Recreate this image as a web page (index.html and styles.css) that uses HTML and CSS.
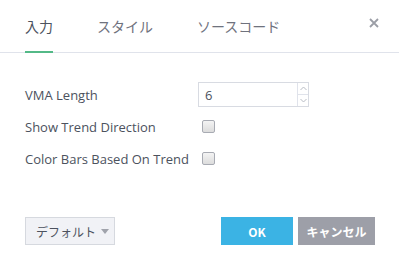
FILE: index.html
```html
<!DOCTYPE html>
<html lang="ja">
<head>
    <meta charset="UTF-8">
    <title>VMA 設定</title>
    <link rel="stylesheet" href="styles.css">
</head>
<body>
    <div class="dialog">
        <div class="tabs">
            <div class="tab active">入力</div>
            <div class="tab">スタイル</div>
            <div class="tab">ソースコード</div>
            <div class="close">
                <svg width="10" height="10" viewBox="0 0 10 10">
                    <path d="M1 1L9 9M9 1L1 9" stroke="#9b9ea6" stroke-width="1.8" fill="none"/>
                </svg>
            </div>
        </div>
        <div class="content">
            <div class="row">
                <label class="label" for="vmaLength">VMA Length</label>
                <div class="spin">
                    <input type="text" id="vmaLength" value="6">
                    <div class="arrows">
                        <span class="arrow">
                            <svg width="7" height="5" viewBox="0 0 7 5"><path d="M0.5 4L3.5 1L6.5 4" stroke="#b8bcc4" fill="none"/></svg>
                        </span>
                        <span class="arrow">
                            <svg width="7" height="5" viewBox="0 0 7 5"><path d="M0.5 1L3.5 4L6.5 1" stroke="#b8bcc4" fill="none"/></svg>
                        </span>
                    </div>
                </div>
            </div>
            <div class="row">
                <label class="label" for="showTrend">Show Trend Direction</label>
                <span class="check" id="showTrend"></span>
            </div>
            <div class="row">
                <label class="label" for="colorBars">Color Bars Based On Trend</label>
                <span class="check" id="colorBars"></span>
            </div>
        </div>
        <div class="footer">
            <div class="defaults">デフォルト <span class="caret"></span></div>
            <div class="buttons">
                <button class="btn ok">OK</button>
                <button class="btn cancel">キャンセル</button>
            </div>
        </div>
    </div>
</body>
</html>
```

FILE: styles.css
```css
body {
    margin: 0;
    background: #fff;
    font-family: 'Open Sans', 'Noto Sans CJK JP', sans-serif;
    color: #4c525e;
}
.dialog {
    width: 399px;
    height: 270px;
    box-sizing: border-box;
}
.tabs {
    display: flex;
    height: 53px;
    box-sizing: border-box;
    padding-left: 25px;
    border-bottom: 1px solid #e0e3eb;
}
.tab {
    height: 53px;
    box-sizing: border-box;
    margin-bottom: -1px;
    margin-right: 44px;
    padding-bottom: 0;
    display: flex;
    align-items: center;
    font-family: 'Noto Sans CJK JP', sans-serif;
    font-size: 14px;
    color: #6f727d;
    border-bottom: 2px solid transparent;
}
.tab.active {
    color: #4c525e;
    border-bottom-color: #53b987;
}
.close {
    margin-left: auto;
    width: 10px;
    padding: 18px 20px 0 0;
}
.close svg {
    display: block;
}
.content {
    padding: 29px 0 0 25px;
    display: flex;
    flex-direction: column;
    gap: 7px;
}
.row {
    display: flex;
    align-items: center;
    height: 25px;
}
.label {
    width: 173px;
    font-size: 13px;
}
.spin {
    display: flex;
    width: 111px;
    height: 25px;
    box-sizing: border-box;
    border: 1px solid #d8dbe2;
}
.spin input {
    width: 98px;
    border: none;
    outline: none;
    padding: 0 0 0 6px;
    font-family: 'Open Sans', sans-serif;
    font-size: 13px;
    color: #4c525e;
    box-sizing: border-box;
}
.arrows {
    display: flex;
    flex-direction: column;
    border-left: 1px solid #e0e3eb;
    flex: 1;
}
.arrow {
    flex: 1;
    display: flex;
    align-items: center;
    justify-content: center;
}
.arrow + .arrow {
    border-top: 1px solid #e0e3eb;
}
.check {
    margin-left: 4px;
    width: 11px;
    height: 11px;
    border: 1px solid #a8abb3;
    border-radius: 2px;
    background: linear-gradient(#f4f4f4, #dcdcdc);
}
.footer {
    display: flex;
    justify-content: space-between;
    align-items: center;
    padding: 46px 24px 0 25px;
}
.defaults {
    width: 90px;
    height: 28px;
    box-sizing: border-box;
    border: 1px solid #d6d9df;
    background: #f1f2f6;
    display: flex;
    align-items: center;
    padding-left: 10px;
    font-family: 'Noto Sans CJK JP', sans-serif;
    font-size: 12px;
    color: #4c525e;
}
.caret {
    margin-left: 5px;
    border-left: 4px solid transparent;
    border-right: 4px solid transparent;
    border-top: 5px solid #a0a3ab;
}
.buttons {
    display: flex;
    gap: 5px;
}
.btn {
    height: 28px;
    border: none;
    color: #fff;
    font-family: 'Noto Sans CJK JP', sans-serif;
    font-weight: bold;
    font-size: 12px;
    padding: 0;
}
.ok {
    width: 72px;
    background: #3bb3e4;
}
.cancel {
    width: 77px;
    background: #9d9fa8;
}
```
